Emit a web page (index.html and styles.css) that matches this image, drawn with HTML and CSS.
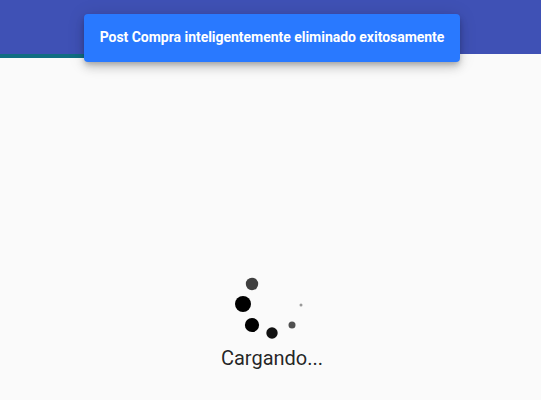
FILE: index.html
```html
<!DOCTYPE html>
<html lang="es">
<head>
<meta charset="utf-8">
<title>Cargando</title>
<link rel="stylesheet" href="styles.css">
</head>
<body>
<header class="toolbar"></header>
<div class="tab-ink"></div>
<main class="loading">
  <svg class="spinner" width="72" height="66" viewBox="0 0 72 66" aria-hidden="true">
    <circle cx="18" cy="10" r="6.2" fill="#3f3f3f"/>
    <circle cx="9" cy="30" r="8"/>
    <circle cx="18" cy="51" r="7.1"/>
    <circle cx="38" cy="59" r="5.7" fill="#111"/>
    <circle cx="58" cy="51" r="3.5" fill="#505050"/>
    <circle cx="67" cy="31" r="1.5" fill="#999"/>
  </svg>
  <p class="loading-text">Cargando...</p>
</main>
<div class="snackbar" role="status">Post Compra inteligentemente eliminado exitosamente</div>
</body>
</html>
```
FILE: styles.css
```css
body {
  margin: 0;
  height: 400px;
  overflow: hidden;
  background: #fafafa;
  color: rgba(0, 0, 0, 0.87);
  font-family: Roboto, sans-serif;
}

.toolbar {
  height: 54px;
  background: #3f51b5;
}

.tab-ink {
  width: 90px;
  height: 4px;
  background: #116d82;
}

.loading {
  display: flex;
  flex-direction: column;
  align-items: center;
  padding: 216px 0 0 3px;
}

.spinner {
  display: block;
  margin-right: 5px;
}

.loading-text {
  margin: 3px 0 0;
  font-size: 20px;
  line-height: 30px;
}

.snackbar {
  position: absolute;
  top: 14px;
  left: 84px;
  box-sizing: border-box;
  width: 376px;
  height: 48px;
  border-radius: 4px;
  background: #2979ff;
  color: #fff;
  font-size: 14px;
  font-weight: 700;
  letter-spacing: -0.03px;
  line-height: 46px;
  text-align: center;
  white-space: nowrap;
  box-shadow: 0 3px 5px -1px rgba(0, 0, 0, 0.2), 0 6px 10px rgba(0, 0, 0, 0.14), 0 1px 18px rgba(0, 0, 0, 0.12);
}
```
